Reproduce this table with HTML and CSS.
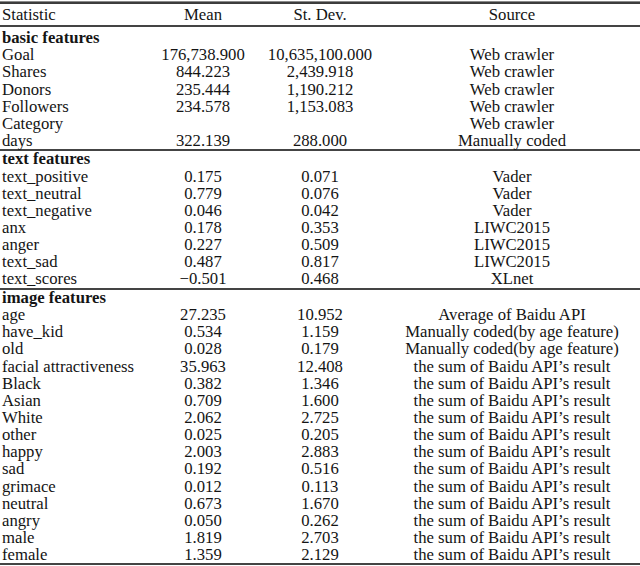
FILE: index.html
```html
<!DOCTYPE html>
<html>
<head>
<meta charset="utf-8">
<link rel="stylesheet" href="styles.css">
</head>
<body>
<div class="rules-top"></div>
<table class="stats">
  <colgroup>
    <col class="c1"><col class="c2"><col class="c3"><col class="c4">
  </colgroup>
  <thead>
    <tr><th class="left">Statistic</th><th>Mean</th><th>St. Dev.</th><th>Source</th></tr>
  </thead>
  <tbody>
    <tr class="sec first"><td colspan="4">basic features</td></tr>
    <tr><td>Goal</td><td>176,738.900</td><td>10,635,100.000</td><td>Web crawler</td></tr>
    <tr><td>Shares</td><td>844.223</td><td>2,439.918</td><td>Web crawler</td></tr>
    <tr><td>Donors</td><td>235.444</td><td>1,190.212</td><td>Web crawler</td></tr>
    <tr><td>Followers</td><td>234.578</td><td>1,153.083</td><td>Web crawler</td></tr>
    <tr><td>Category</td><td></td><td></td><td>Web crawler</td></tr>
    <tr><td>days</td><td>322.139</td><td>288.000</td><td>Manually coded</td></tr>
  </tbody>
  <tbody>
    <tr class="sec"><td colspan="4">text features</td></tr>
    <tr><td>text_positive</td><td>0.175</td><td>0.071</td><td>Vader</td></tr>
    <tr><td>text_neutral</td><td>0.779</td><td>0.076</td><td>Vader</td></tr>
    <tr><td>text_negative</td><td>0.046</td><td>0.042</td><td>Vader</td></tr>
    <tr><td>anx</td><td>0.178</td><td>0.353</td><td>LIWC2015</td></tr>
    <tr><td>anger</td><td>0.227</td><td>0.509</td><td>LIWC2015</td></tr>
    <tr><td>text_sad</td><td>0.487</td><td>0.817</td><td>LIWC2015</td></tr>
    <tr><td>text_scores</td><td>&minus;0.501</td><td>0.468</td><td>XLnet</td></tr>
  </tbody>
  <tbody>
    <tr class="sec"><td colspan="4">image features</td></tr>
    <tr><td>age</td><td>27.235</td><td>10.952</td><td>Average of Baidu API</td></tr>
    <tr><td>have_kid</td><td>0.534</td><td>1.159</td><td>Manually coded(by age feature)</td></tr>
    <tr><td>old</td><td>0.028</td><td>0.179</td><td>Manually coded(by age feature)</td></tr>
    <tr><td>facial attractiveness</td><td>35.963</td><td>12.408</td><td>the sum of Baidu API’s result</td></tr>
    <tr><td>Black</td><td>0.382</td><td>1.346</td><td>the sum of Baidu API’s result</td></tr>
    <tr><td>Asian</td><td>0.709</td><td>1.600</td><td>the sum of Baidu API’s result</td></tr>
    <tr><td>White</td><td>2.062</td><td>2.725</td><td>the sum of Baidu API’s result</td></tr>
    <tr><td>other</td><td>0.025</td><td>0.205</td><td>the sum of Baidu API’s result</td></tr>
    <tr><td>happy</td><td>2.003</td><td>2.883</td><td>the sum of Baidu API’s result</td></tr>
    <tr><td>sad</td><td>0.192</td><td>0.516</td><td>the sum of Baidu API’s result</td></tr>
    <tr><td>grimace</td><td>0.012</td><td>0.113</td><td>the sum of Baidu API’s result</td></tr>
    <tr><td>neutral</td><td>0.673</td><td>1.670</td><td>the sum of Baidu API’s result</td></tr>
    <tr><td>angry</td><td>0.050</td><td>0.262</td><td>the sum of Baidu API’s result</td></tr>
    <tr><td>male</td><td>1.819</td><td>2.703</td><td>the sum of Baidu API’s result</td></tr>
    <tr><td>female</td><td>1.359</td><td>2.129</td><td>the sum of Baidu API’s result</td></tr>
  </tbody>
</table>
</body>
</html>
```

FILE: styles.css
```css
html, body {
  margin: 0;
  padding: 0;
  background: #ffffff;
}
body {
  font-family: "Liberation Serif", "Times New Roman", serif;
  font-size: 16.7px;
  color: #141414;
}
.rules-top {
  margin-top: 1px;
  height: 1px;
  background: #8a8a8a;
  border-bottom: 2px solid #3c3c3c;
}
.stats {
  width: 640px;
  border-collapse: collapse;
  table-layout: fixed;
  margin-top: 1px;
}
.c1 { width: 150px; }
.c2 { width: 106px; }
.c3 { width: 128px; }
.c4 { width: 256px; }
.stats th {
  font-weight: normal;
  text-align: center;
  height: 20px;
  padding: 0;
  line-height: 20px;
  border-bottom: 2px solid #444;
}
.stats th.left {
  text-align: left;
  padding-left: 2px;
}
.stats td {
  padding: 0;
  line-height: 17.15px;
  text-align: center;
  white-space: nowrap;
}
.stats td:first-child {
  text-align: left;
  padding-left: 2px;
}
.stats tbody + tbody {
  border-top: 2px solid #444;
}
.stats tbody:last-child {
  border-bottom: 2px solid #444;
}
.stats tr.sec td {
  font-weight: bold;
  line-height: 16.4px;
}
.stats tr.sec.first td {
  line-height: 17.2px;
  padding-top: 2px;
}
```
